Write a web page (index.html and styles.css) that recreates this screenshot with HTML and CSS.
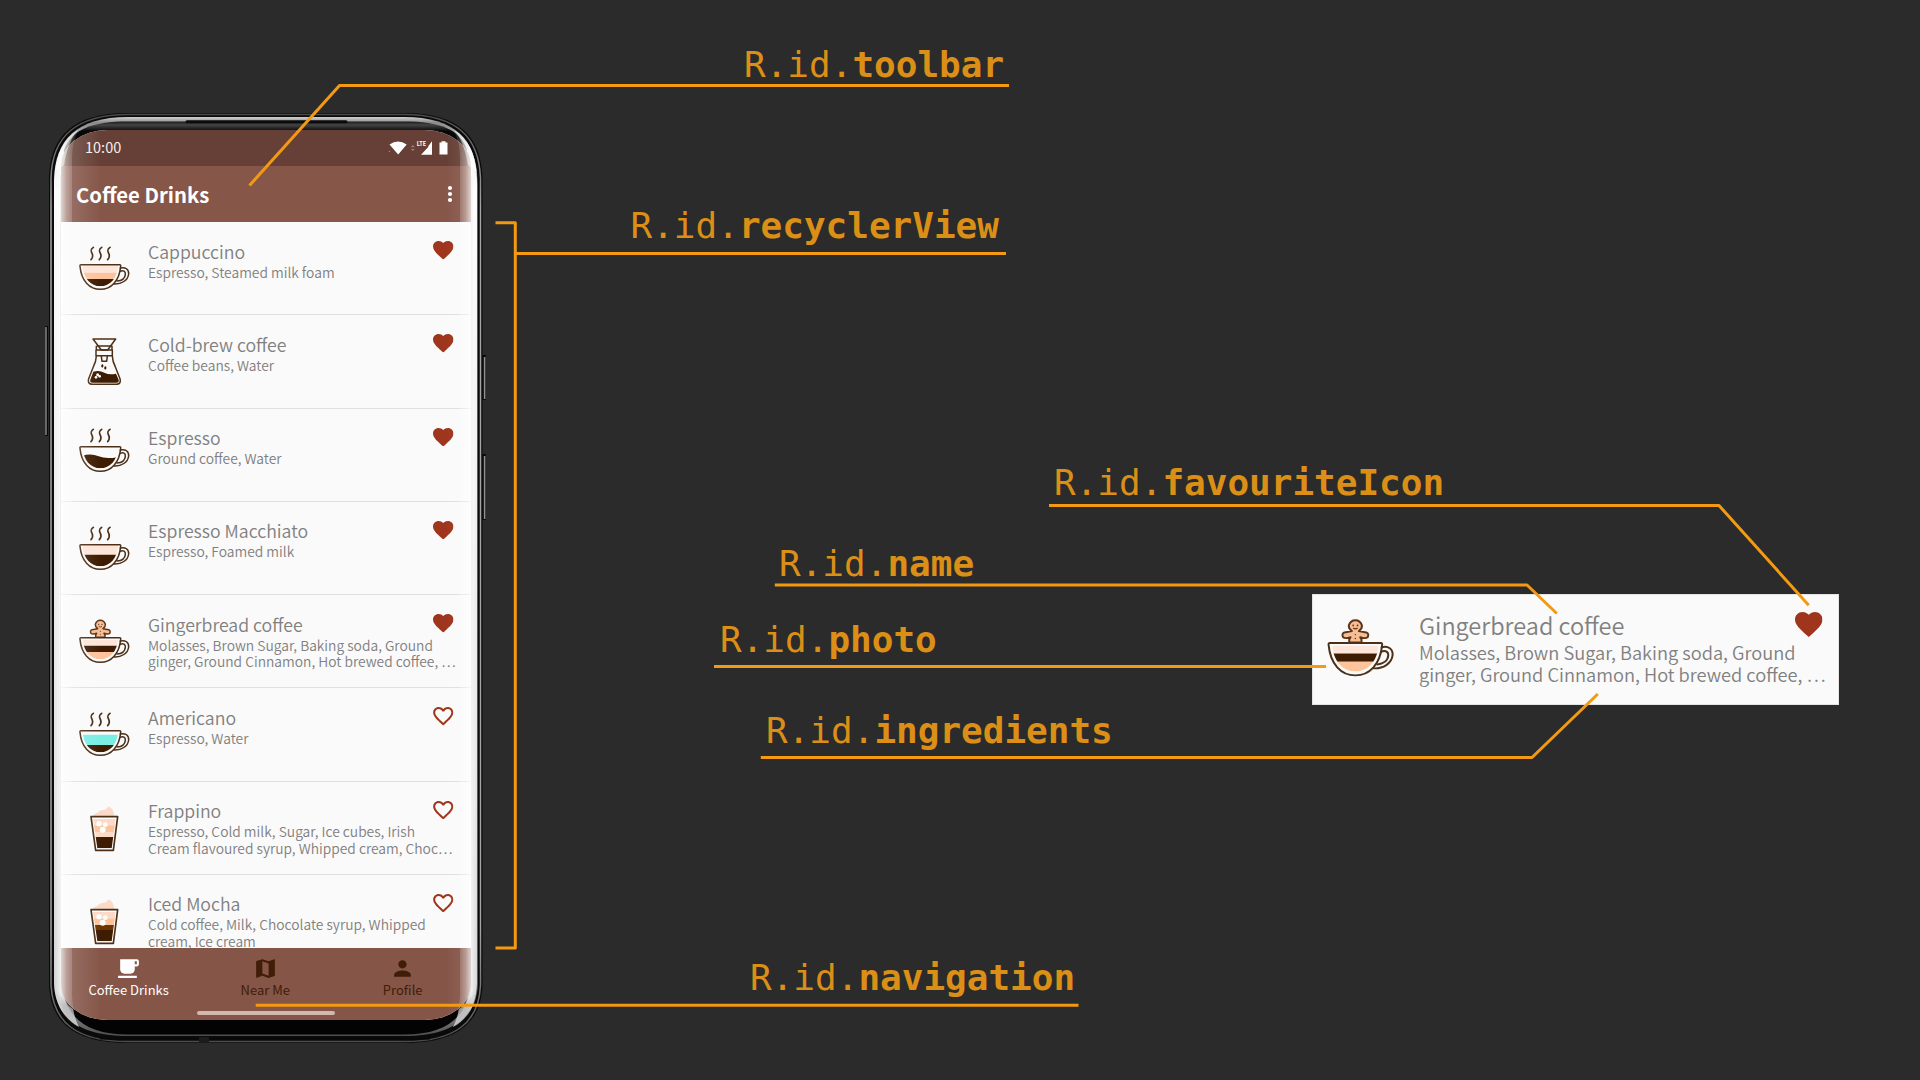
FILE: index.html
```
<!DOCTYPE html>
<html lang="en">
<head>
<meta charset="utf-8">
<title>Coffee Drinks – view ids</title>
<link rel="stylesheet" href="styles.css">
</head>
<body>
<svg class="defs" width="0" height="0" aria-hidden="true">
  <defs>
    <clipPath id="bowl"><path d="M158 498H264C262 534 240 559 211 559S160 534 158 498z"/></clipPath>
    <clipPath id="glass"><path d="M159 384H227L215 473H172z"/></clipPath>
    <g id="cup" fill="none" stroke="#4b2f17" stroke-width="4.5" stroke-linecap="round" stroke-linejoin="round">
      <path d="M153 494H269Q273 494 272 499C268 542 244 568 211 568S154 542 150 499Q149 494 153 494z"/>
      <path d="M271 504C286 500 297 508 296 522C294 541 274 553 253 552"/>
      <path d="M270 514C280 510 287 514 286 523C285 535 274 542 261 543"/>
    </g>
    <g id="steam" fill="none" stroke="#4b2f17" stroke-width="5" stroke-linecap="round">
      <path d="M190 442C178 450 185 456 187 462Q190 472 183 479"/>
      <path d="M215 442C203 450 210 456 212 462Q215 472 208 479"/>
      <path d="M240 442C228 450 235 456 237 462Q240 472 233 479"/>
    </g>
    <g id="man" stroke="#5b351a" stroke-width="4.5" stroke-linejoin="round" fill="#f8bd92">
      <path d="M197 493V486L200 481Q188 485 183 481Q179 473 186 470L203 467Q195 461 196 454Q200 442 211 442T226 454Q227 461 219 467L236 470Q243 473 239 481Q234 485 222 481L225 486V493z"/>
      <g fill="#5b351a" stroke="none"><circle cx="206" cy="454" r="2"/><circle cx="216" cy="454" r="2"/><circle cx="211" cy="475" r="1.6"/><circle cx="211" cy="484" r="1.6"/></g>
      <path d="M206 460Q211 464 216 460" fill="none" stroke-width="2.5"/>
    </g>
    <symbol id="i-gingerbread" viewBox="144 426 162 150">
      <use href="#man"/>
      <g clip-path="url(#bowl)"><path fill="#fff" d="M150 490h130v80H150z"/><path fill="#fde5d9" d="M150 500h130v18H150z"/><path fill="#3d1c02" d="M150 518h130v19H150z"/><path fill="#fdc49c" d="M150 537h130v30H150z"/></g>
      <use href="#cup"/>
    </symbol>
    <symbol id="i-cappuccino" viewBox="144 426 162 150">
      <use href="#steam"/>
      <g clip-path="url(#bowl)"><path fill="#fde5d9" d="M150 498h130v20H150z"/><path fill="#fdc49c" d="M150 518h130v19H150z"/><path fill="#3d1c02" d="M150 537h130v30H150z"/></g>
      <use href="#cup"/>
    </symbol>
    <symbol id="i-macchiato" viewBox="144 426 162 150">
      <use href="#steam"/>
      <g clip-path="url(#bowl)"><path fill="#fde5d9" d="M150 498h130v26H150z"/><path fill="#3d1c02" d="M150 524h130v40H150z"/></g>
      <use href="#cup"/>
    </symbol>
    <symbol id="i-americano" viewBox="144 426 162 150">
      <use href="#steam"/>
      <g clip-path="url(#bowl)"><path fill="#7beee4" d="M150 506h130v31H150z"/><path fill="#3d1c02" d="M150 537h130v30H150z"/></g>
      <use href="#cup"/>
    </symbol>
    <symbol id="i-espresso" viewBox="144 426 162 150">
      <use href="#steam"/>
      <path clip-path="url(#bowl)" fill="#3d1c02" d="M150 524Q180 512 206 523T275 522V570H150z"/>
      <use href="#cup"/>
    </symbol>
    <symbol id="i-carafe" viewBox="114 315 162 150">
      <g fill="none" stroke="#4b2f17" stroke-width="4.5" stroke-linejoin="round" stroke-linecap="round">
        <path d="M159 327H227L203 360H184z"/>
        <path d="M173 348H213M168 360H217V377H168zM169 349V360M216 349V360"/>
        <path d="M184 378L186 394H200L202 378"/>
        <path d="M169 378Q168 396 161 408L146 446Q142 462 156 463H230Q244 462 240 446L225 408Q218 396 217 378"/>
      </g>
      <path fill="#3d1c02" d="M160 425Q178 420 193 428T228 431L236 449Q238 458 229 458H157Q149 458 151 449z"/>
      <path fill="#3d1c02" d="M187 402q7 6 0 11q-7-4 0-11zM196 408q7 6 0 11q-7-4 0-11z"/>
      <g fill="#fff"><circle cx="173" cy="434" r="4.5"/><circle cx="168" cy="442" r="4"/><circle cx="179" cy="439" r="4"/></g>
    </symbol>
    <symbol id="i-frappino" viewBox="114 334 162 150">
      <path fill="#fddac7" d="M158 377Q162 368 172 366Q178 357 190 358Q201 357 205 347Q222 354 223 377z"/>
      <path fill="#fff" d="M153 378H234L220 479H167z"/>
      <g clip-path="url(#glass)"><path fill="#fddac7" d="M150 380h90v24h-90z"/><path fill="#fdc49c" d="M150 404h90v20h-90z"/><path fill="#fddac7" d="M150 424h90v15h-90z"/><path fill="#3d1c02" d="M150 439h90v40h-90z"/></g>
      <g fill="#fff"><circle cx="177" cy="399" r="8"/><circle cx="196" cy="402" r="7"/><circle cx="188" cy="417" r="9"/></g>
      <path d="M153 378H233L220 479H167z" fill="none" stroke="#4b2f17" stroke-width="5" stroke-linejoin="round"/>
    </symbol>
    <symbol id="i-mocha" viewBox="114 334 162 150">
      <path fill="#fddac7" d="M158 377Q162 368 172 366Q178 357 190 358Q201 357 205 347Q222 354 223 377z"/>
      <path fill="#fff" d="M153 378H234L220 479H167z"/>
      <g clip-path="url(#glass)"><path fill="#fddac7" d="M150 380h90v24h-90z"/><path fill="#fdc49c" d="M150 404h90v20h-90z"/><path fill="#6e3500" d="M150 424h90v15h-90z"/><path fill="#3d1c02" d="M150 439h90v40h-90z"/></g>
      <g fill="#fff"><circle cx="177" cy="399" r="8"/><circle cx="196" cy="402" r="7"/><circle cx="188" cy="417" r="9"/></g>
      <path d="M153 378H233L220 479H167z" fill="none" stroke="#4b2f17" stroke-width="5" stroke-linejoin="round"/>
    </symbol>
    <symbol id="i-heart" viewBox="2 3 20 18.35" preserveAspectRatio="none"><path fill="#9f351c" d="M12 21.35l-1.45-1.32C5.4 15.36 2 12.28 2 8.5 2 5.42 4.42 3 7.5 3c1.74 0 3.41.81 4.5 2.09C13.09 3.81 14.76 3 16.5 3 19.58 3 22 5.42 22 8.5c0 3.78-3.4 6.86-8.55 11.54L12 21.35z"/></symbol>
    <symbol id="i-heart-o" viewBox="2 3 20 18.35"><path fill="#9f351c" d="M16.5 3c-1.74 0-3.41.81-4.5 2.09C10.91 3.81 9.24 3 7.5 3 4.42 3 2 5.42 2 8.5c0 3.78 3.4 6.86 8.55 11.54L12 21.35l1.45-1.32C18.6 15.36 22 12.28 22 8.5 22 5.42 19.58 3 16.5 3zm-4.4 15.55l-.1.1-.1-.1C7.14 14.24 4 11.39 4 8.5 4 6.5 5.5 5 7.5 5c1.54 0 3.04.99 3.57 2.36h1.87C13.46 5.99 14.96 5 16.5 5c2 0 3.5 1.5 3.5 3.5 0 2.89-3.14 5.74-7.9 10.05z"/></symbol>
    <linearGradient id="rim" gradientUnits="userSpaceOnUse" x1="0" x2="0" y1="117" y2="1037"><stop offset="0" stop-color="#d0d0d0"/><stop offset=".006" stop-color="#8c8c8c"/><stop offset=".04" stop-color="#e0e0e0"/><stop offset=".08" stop-color="#fafafa"/><stop offset=".3" stop-color="#ececec"/><stop offset=".75" stop-color="#d2d2d2"/><stop offset=".95" stop-color="#bdbdbd"/><stop offset="1" stop-color="#4a4a4a"/></linearGradient>
    <linearGradient id="edge" x1="0" x2="0" y1="0" y2="1"><stop offset="0" stop-color="#4a4a4a"/><stop offset=".1" stop-color="#a5a5a5"/><stop offset=".88" stop-color="#a5a5a5"/><stop offset="1" stop-color="#4c4c4c"/></linearGradient>
    <linearGradient id="visor" gradientUnits="userSpaceOnUse" x1="0" x2="0" y1="121" y2="131"><stop offset="0" stop-color="#151515"/><stop offset=".4" stop-color="#444"/><stop offset="1" stop-color="#080808"/></linearGradient>
    <linearGradient id="shine" gradientUnits="userSpaceOnUse" x1="54" x2="72" y1="0" y2="0"><stop offset="0" stop-color="#fff" stop-opacity=".3"/><stop offset=".36" stop-color="#fff" stop-opacity=".75"/><stop offset=".7" stop-color="#fff" stop-opacity=".35"/><stop offset="1" stop-color="#fff" stop-opacity=".16"/></linearGradient>
    <linearGradient id="tip" x1="0" x2="0" y1="0" y2="1"><stop offset="0" stop-color="#ddd" stop-opacity="0"/><stop offset=".5" stop-color="#bbb" stop-opacity=".7"/><stop offset="1" stop-color="#ddd" stop-opacity=".8"/></linearGradient>
    <g id="shine-side">
      <path fill="url(#shine)" d="M54 185C55 158 62 138 79 129.500C74 137 72 148 72 160V995C73 1010 75 1020 79 1027C64 1020 55 1003 54 985z"/>
      <path fill="#fff" fill-opacity=".5" d="M55 172C57 154 64 138 78 130Q68 141 64 165z"/>
      <path fill="url(#tip)" d="M55 985C60 998 66 1005 73 1009Q75 1020 79 1027C65 1020 57 1005 55 985z"/>
    </g>
  </defs>
</svg>

<main class="canvas">
  <section class="phone">
    <svg class="frame" viewBox="40 108 450 940" width="450" height="940">
      <path d="M46.500 326V436" stroke="#080808" stroke-width="3"/><path d="M46 327V435" stroke="#a8a8a8" stroke-width="1.2"/>
      <path d="M484 355V400M484 454V520" stroke="#080808" stroke-width="3.4"/><path d="M484.600 357V399M484.600 456V519" stroke="#909090" stroke-width="1.6"/>
      <path fill="#0a0a0a" d="M49 178C50 137 72 113 128 113H404C460 113 481 137 482.500 178V985C481 1024 456 1043 404 1043H128C76 1043 51 1024 49 985z"/>
      <path fill="none" stroke="url(#edge)" stroke-width="1.5" d="M51 178C52 138 74 114.500 128 114.500H404C458 114.500 479 138 480.500 178V985C479 1023 455 1041.500 404 1041.500H128C77 1041.500 53 1023 51 985z"/>
      <path fill="url(#rim)" d="M54 180C55 140 76 117 128 117H404C456 117 476 140 477 180V983C476 1018 452 1036 404 1036H128C80 1036 55 1018 54 983z"/>
      <path fill="url(#visor)" d="M64 150C72 129 92 121.500 128 121.500H404C440 121.500 460 129 467 150V160H64z"/>
      <path fill="#030303" d="M62 985H470C467 1018 446 1034.500 404 1034.500H128C86 1034.500 66 1018 62 985z"/>
      <path d="M100 1038.500H430" stroke="#080808" stroke-width="2"/>
      <path d="M187 121.800H346" stroke="#0b0b0b" stroke-width="3" stroke-linecap="round"/>
      <path d="M60.500 175V975M471.800 175V975" stroke="#c4c4c4" stroke-width="1"/>
      <path d="M199 1037h10v5h-10z" fill="#1c1c1c"/>
    </svg>
    <div class="screen">
      <header class="status">
        <span class="time">10:00</span>
        <svg class="status-icons" width="62" height="16" viewBox="388 140 62 16" fill="#fff">
          <path d="M389.500 144.500Q398 138.500 406.700 144.500L398.200 154.600z"/>
          <path d="M389.500 150.500l1 1.500h-2zM412.800 145l2 2.300h-4zM412.800 151l2-2h-4z" opacity=".35"/>
          <path d="M421 154.800L432 143V154.800zM428 146.500L432 141.300V148z"/>
          <text x="416.800" y="145.800" class="lte">LTE</text>
          <path d="M439.500 142.500h2v-1.300h4v1.300h2v12h-8z"/>
        </svg>
      </header>
      <div class="toolbar">
        <h1 class="title">Coffee Drinks</h1>
        <svg width="6" height="18" viewBox="0 0 6 18" fill="#fff"><circle cx="3" cy="3" r="2.100"/><circle cx="3" cy="9" r="2.100"/><circle cx="3" cy="15" r="2.100"/></svg>
      </div>
      <ul class="list">
        <li class="row"><svg class="photo"><use href="#i-cappuccino"/></svg><div class="text"><h2>Cappuccino</h2><p>Espresso, Steamed milk foam</p></div><svg class="heart"><use href="#i-heart"/></svg></li>
        <li class="row"><svg class="photo"><use href="#i-carafe"/></svg><div class="text"><h2>Cold-brew coffee</h2><p>Coffee beans, Water</p></div><svg class="heart"><use href="#i-heart"/></svg></li>
        <li class="row"><svg class="photo raised"><use href="#i-espresso"/></svg><div class="text"><h2>Espresso</h2><p>Ground coffee, Water</p></div><svg class="heart"><use href="#i-heart"/></svg></li>
        <li class="row"><svg class="photo"><use href="#i-macchiato"/></svg><div class="text"><h2>Espresso Macchiato</h2><p>Espresso, Foamed milk</p></div><svg class="heart"><use href="#i-heart"/></svg></li>
        <li class="row"><svg class="photo"><use href="#i-gingerbread"/></svg><div class="text"><h2>Gingerbread coffee</h2><p>Molasses, Brown Sugar, Baking soda, Ground<br>ginger, Ground Cinnamon, Hot brewed coffee, …</p></div><svg class="heart"><use href="#i-heart"/></svg></li>
        <li class="row"><svg class="photo"><use href="#i-americano"/></svg><div class="text"><h2>Americano</h2><p>Espresso, Water</p></div><svg class="heart"><use href="#i-heart-o"/></svg></li>
        <li class="row"><svg class="photo"><use href="#i-frappino"/></svg><div class="text"><h2>Frappino</h2><p>Espresso, Cold milk, Sugar, Ice cubes, Irish<br>Cream flavoured syrup, Whipped cream, Choc…</p></div><svg class="heart"><use href="#i-heart-o"/></svg></li>
        <li class="row"><svg class="photo"><use href="#i-mocha"/></svg><div class="text"><h2>Iced Mocha</h2><p>Cold coffee, Milk, Chocolate syrup, Whipped<br>cream, Ice cream</p></div><svg class="heart"><use href="#i-heart-o"/></svg></li>
      </ul>
      <nav class="nav">
        <div class="tab active"><svg viewBox="0 0 24 24"><path d="M20 3H4v10c0 2.210 1.790 4 4 4h6c2.210 0 4-1.790 4-4v-3h2c1.110 0 2-.9 2-2V5c0-1.110-.89-2-2-2zm0 5h-2V5h2v3zM2 21h18v-2H2v2z"/></svg><span>Coffee Drinks</span></div>
        <div class="tab"><svg viewBox="0 0 24 24"><path d="M20.500 3l-.16.03L15 5.100 9 3 3.360 4.900c-.21.07-.36.25-.36.48V20.500c0 .28.22.5.5.5l.16-.03L9 18.900l6 2.100 5.640-1.900c.21-.07.36-.25.36-.48V3.500c0-.28-.22-.5-.5-.5zM15 19l-6-2.110V5l6 2.110V19z"/></svg><span>Near Me</span></div>
        <div class="tab"><svg viewBox="0 0 24 24"><path d="M12 12c2.210 0 4-1.790 4-4s-1.790-4-4-4-4 1.790-4 4 1.790 4 4 4zm0 2c-2.670 0-8 1.340-8 4v2h16v-2c0-2.660-5.330-4-8-4z"/></svg><span>Profile</span></div>
        <i class="home-bar"></i>
      </nav>
      <div class="glare"></div>
    </div>
    <svg class="frame" viewBox="40 108 450 940" width="450" height="940">
      <use href="#shine-side"/>
      <use href="#shine-side" transform="translate(532) scale(-1 1)"/>
    </svg>
  </section>

  <article class="card">
    <svg class="photo"><use href="#i-gingerbread"/></svg>
    <div class="text"><h2>Gingerbread coffee</h2><p>Molasses, Brown Sugar, Baking soda, Ground<br>ginger, Ground Cinnamon, Hot brewed coffee, …</p></div>
    <svg class="heart"><use href="#i-heart"/></svg>
  </article>

  <svg class="lines" width="1920" height="1080" viewBox="0 0 1920 1080">
    <path d="M1009 85.500H339.500L249.500 185.500"/>
    <path d="M495.500 222.700H515.300V948H495.500M515.500 253.500H1006"/>
    <path d="M1049 505.500H1719L1808.700 605.300"/>
    <path d="M774.800 585H1527L1556.800 613.500"/>
    <path d="M714 666.500H1326"/>
    <path d="M760.800 757.500H1532L1597.800 694"/>
    <path d="M255.700 1005.300H1078.500"/>
  </svg>

  <div class="label l-toolbar">R.id.<b>toolbar</b></div>
  <div class="label l-recycler">R.id.<b>recyclerView</b></div>
  <div class="label l-favourite">R.id.<b>favouriteIcon</b></div>
  <div class="label l-name">R.id.<b>name</b></div>
  <div class="label l-photo">R.id.<b>photo</b></div>
  <div class="label l-ingredients">R.id.<b>ingredients</b></div>
  <div class="label l-navigation">R.id.<b>navigation</b></div>
</main>
</body>
</html>
```
FILE: styles.css
```
* { box-sizing: border-box; margin: 0; padding: 0; }
body { background: #2b2b2b; overflow: hidden; font-family: "Noto Sans CJK JP", "Noto Sans", sans-serif; }
.defs { position: absolute; }
.canvas { position: relative; width: 1920px; height: 1080px; }

/* phone */
.phone { position: absolute; left: 40px; top: 108px; width: 450px; height: 940px; padding: 22px 19px 28px 21px; }
.frame { position: absolute; left: 0; top: 0; }
.screen { position: relative; display: flex; flex-direction: column; width: 410px; height: 890px; overflow: hidden; border-radius: 46px / 36px; background: #fafafa; }
.status { display: flex; justify-content: space-between; align-items: center; flex: none; height: 36px; padding: 0 21px 0 24px; background: #664036; color: #f3eeec; }
.time { font-size: 14.5px; line-height: 20px; margin-top: -1.5px; }
.status-icons { margin-top: 0; }
.lte { font-size: 5.5px; font-weight: 700; }
.toolbar { display: flex; justify-content: space-between; align-items: center; flex: none; height: 56px; padding: 0 18px 0 15px; background: #865649; color: #fff; }
.title { font-size: 20.3px; font-weight: 700; line-height: 24px; }
.list { flex: 1; min-height: 0; overflow: hidden; list-style: none; }
.row { display: flex; align-items: flex-start; height: 93.25px; padding: 19px 17.5px 0 16.5px; border-bottom: 1px solid #e0e0e0; }
.photo { flex: none; width: 54px; height: 50px; margin-top: 1px; }
.raised { margin-top: -3.5px; }
.text { flex: 1; min-width: 0; padding-left: 16.500px; margin-top: -.4px; white-space: nowrap; color: #808080; }
.text h2 { font-size: 17.700px; font-weight: 350; line-height: 20px; }
.text p { font-size: 13.820px; font-weight: 350; line-height: 16.600px; margin-top: 3px; }
.heart { flex: none; width: 20.500px; height: 18.500px; }
.nav { position: relative; display: flex; flex: none; height: 72px; padding-top: 8px; background: #855548; color: #3f1d07; }
.tab { display: flex; flex: 1; flex-direction: column; align-items: center; font-size: 13px; line-height: 18px; }
.tab:not(:last-of-type) { position: relative; left: -.7px; }
.tab svg { width: 25px; height: 25px; fill: currentColor; }
.tab.active { color: #fff; }
.home-bar { position: absolute; left: 136px; bottom: 5px; width: 138px; height: 4px; border-radius: 2px; background: #d3b8b0; }
.glare { position: absolute; inset: 0; background: linear-gradient(90deg, rgba(255,255,255,.14) 0, rgba(255,255,255,.14) 11px, rgba(255,255,255,0) 40px, rgba(255,255,255,0) 385px, rgba(255,255,255,.1) 100%); }

/* enlarged list row */
.card { position: absolute; left: 1312px; top: 594px; display: flex; align-items: flex-start; width: 527px; height: 111px; padding: 17px 15.500px 0 13px; background: #fafafa; border: 1px solid #e4e4e4; }
.card .photo { width: 71px; height: 66px; margin-top: .5px; }
.card .text { padding-left: 22px; }
.card .text h2 { font-size: 23.500px; line-height: 26px; }
.card .text p { font-size: 18.250px; line-height: 22.300px; margin-top: 3.500px; }
.card .heart { width: 27.500px; height: 25px; }

/* annotations */
.lines { position: absolute; left: 0; top: 0; fill: none; stroke: #f39a12; stroke-width: 3; stroke-linejoin: round; }
.label { position: absolute; font: 36px/44px "DejaVu Sans Mono", monospace; color: #db8f17; white-space: nowrap; }
.l-toolbar { left: 744px; top: 43px; }
.l-recycler { left: 630.500px; top: 204px; }
.l-favourite { left: 1054px; top: 461px; }
.l-name { left: 779px; top: 542px; }
.l-photo { left: 720px; top: 618px; }
.l-ingredients { left: 766px; top: 709px; }
.l-navigation { left: 750px; top: 956px; }
```
